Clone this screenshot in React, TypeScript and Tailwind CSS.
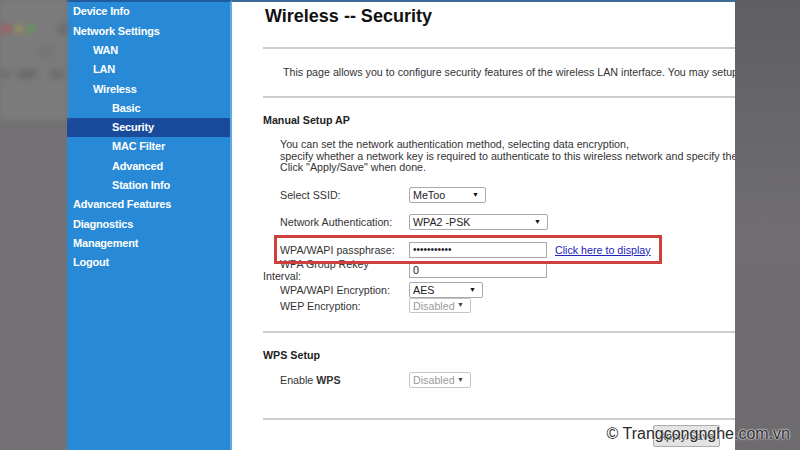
const menu: { label: string; level: number; active?: boolean }[] = [
  { label: "Device Info", level: 0 },
  { label: "Network Settings", level: 0 },
  { label: "WAN", level: 1 },
  { label: "LAN", level: 1 },
  { label: "Wireless", level: 1 },
  { label: "Basic", level: 2 },
  { label: "Security", level: 2, active: true },
  { label: "MAC Filter", level: 2 },
  { label: "Advanced", level: 2 },
  { label: "Station Info", level: 2 },
  { label: "Advanced Features", level: 0 },
  { label: "Diagnostics", level: 0 },
  { label: "Management", level: 0 },
  { label: "Logout", level: 0 },
]

const indent = ["pl-[6px]", "pl-[26px]", "pl-[45px]"]

function Select({ value, width, disabled }: { value: string; width: string; disabled?: boolean }) {
  return (
    <div
      className={`${width} h-full flex items-center justify-between pl-[3px] pr-[6px] border border-[#a9a9a9] rounded-[2px] bg-white ${
        disabled ? "text-[#9a9a9a] border-[#c4c4c4]" : "text-[#222]"
      }`}
    >
      <span>{value}</span>
      <span className={`text-[7px] ${disabled ? "text-[#444]" : "text-[#111]"}`}>▼</span>
    </div>
  )
}

function Row({ label, mt, h = "h-[16px]", children }: { label: React.ReactNode; mt: string; h?: string; children: React.ReactNode }) {
  return (
    <div className={`flex items-center ${h} ${mt}`}>
      <div className="w-[129px] shrink-0 text-[#333]">{label}</div>
      {children}
    </div>
  )
}

function Hr({ mt }: { mt: string }) {
  return <div className={`w-[520px] border-t-2 border-[#cdcdcd] ${mt}`} />
}

export default function App() {
  return (
    <div className="relative w-[800px] h-[450px] flex overflow-hidden font-['Liberation_Sans',Arial,sans-serif] bg-[#6e6c6f]">
      {/* blurred browser background, left */}
      <div className="w-[67px] shrink-0 bg-[#737173] flex flex-col">
        <div className="h-[120px] bg-[#7c7b7c] blur-[2px] flex flex-col pt-[24px] gap-[14px]">
          <div className="flex items-center gap-[4px] pl-[1px]">
            <div className="w-[10px] h-[8px] rounded-full bg-[#a35a5a] blur-[2px]" />
            <div className="w-[9px] h-[8px] rounded-full bg-[#9e9254] blur-[2px]" />
            <div className="w-[8px] h-[8px] rounded-full bg-[#5f9b55] blur-[2px]" />
            <div className="ml-[20px] w-[8px] h-[10px] bg-[#6a696a] blur-[2px]" />
          </div>
          <div className="flex pl-[40px]">
            <div className="w-[12px] h-[8px] bg-[#707070] blur-[3px]" />
          </div>
          <div className="flex items-center gap-[8px]">
            <div className="w-[10px] h-[6px] bg-[#6c6b6c] blur-[2px]" />
            <div className="w-[18px] h-[8px] bg-[#6a696a] blur-[2px]" />
            <div className="ml-[6px] w-[14px] h-[8px] bg-[#6d6c6d] blur-[2px]" />
          </div>
        </div>
      </div>

      {/* sidebar */}
      <div className="w-[165px] shrink-0 bg-[#288ad6] border-t-2 border-t-[#1e5c9e] border-r-2 border-r-[#5fa9e4] flex flex-col">
        {menu.map((m) => (
          <div
            key={m.label}
            className={`h-[19.3px] flex items-center ${indent[m.level]} text-white font-bold text-[11px] tracking-[-0.2px] ${
              m.active ? "bg-[#1a4b9b]" : ""
            }`}
          >
            {m.label}
          </div>
        ))}
      </div>

      {/* content */}
      <div className="w-[503px] shrink-0 bg-white border-t-2 border-[#3b6c96] overflow-hidden pl-[31px] text-[10.7px] text-[#333] flex flex-col">
        <h1 className="mt-[3px] ml-[2px] text-[18px] leading-[22px] font-bold text-[#111]">Wireless -- Security</h1>
        <Hr mt="mt-[20px]" />
        <p className="mt-[16px] pl-[20px] leading-[14px] whitespace-nowrap">
          This page allows you to configure security features of the wireless LAN interface. You may setup
        </p>
        <Hr mt="mt-[17px]" />
        <div className="mt-[15px] leading-[14px] font-bold text-[#222]">Manual Setup AP</div>
        <p className="mt-[12px] pl-[17px] leading-[11.7px] whitespace-nowrap">
          You can set the network authentication method, selecting data encryption,
          <br />
          specify whether a network key is required to authenticate to this wireless network and specify the
          <br />
          Click "Apply/Save" when done.
        </p>

        <div className="pl-[17px] flex flex-col">
          <Row label="Select SSID:" mt="mt-[13px]">
            <Select value="MeToo" width="w-[77px]" />
          </Row>
          <Row label="Network Authentication:" mt="mt-[11px]">
            <Select value="WPA2 -PSK" width="w-[139px]" />
          </Row>
          <Row label="WPA/WAPI passphrase:" mt="mt-[12px]">
            <div className="w-[138px] h-full flex items-center pl-[3px] border border-[#a9a9a9] bg-white text-[10px] leading-none text-[#222]">
              •••••••••••
            </div>
            <a className="ml-[8px] text-[#2222b8] underline">Click here to display</a>
          </Row>
          <Row
            label={
              <div className="-ml-[17px] w-[140px] leading-[12px] indent-[17px]">WPA Group Rekey Interval:</div>
            }
            mt="mt-[4px]"
          >
            <div className="w-[138px] h-full flex items-center pl-[3px] border border-[#a9a9a9] bg-white text-[#222]">0</div>
          </Row>
          <Row label="WPA/WAPI Encryption:" mt="mt-[4px]">
            <Select value="AES" width="w-[74px]" />
          </Row>
          <Row label="WEP Encryption:" mt="mt-0" h="h-[15px]">
            <Select value="Disabled" width="w-[62px]" disabled />
          </Row>
        </div>

        <Hr mt="mt-[18px]" />
        <div className="mt-[15px] leading-[14px] font-bold text-[#222]">WPS Setup</div>
        <div className="pl-[17px]">
          <Row
            label={
              <span>
                Enable <b>WPS</b>
              </span>
            }
            mt="mt-[10px]"
          >
            <Select value="Disabled" width="w-[62px]" disabled />
          </Row>
        </div>
        <Hr mt="mt-[30px]" />
        <div className="mt-[5px] ml-[390px] w-[67px] h-[22px] shrink-0 flex items-center justify-center bg-[#e3e3e3] border border-[#adadad] rounded-[2px] text-[11px] text-[#222]">
          Apply/Save
        </div>
      </div>

      {/* right background */}
      <div className="flex-1 bg-gradient-to-b from-[#5f5e60] via-[#6f6d70] to-[#6d6b6e]" />

      {/* red highlight annotation */}
      <div className="absolute left-[274px] top-[235px] w-[388px] h-[29px] border-[3px] border-[#cd403b]" />

      {/* watermark */}
      <div className="absolute right-[10px] top-[422px] text-[16px] text-[#2b2b2b] [text-shadow:0_0_2px_#fff,0_0_2px_#fff]">
        © Trangcongnghe.com.vn
      </div>
    </div>
  )
}
